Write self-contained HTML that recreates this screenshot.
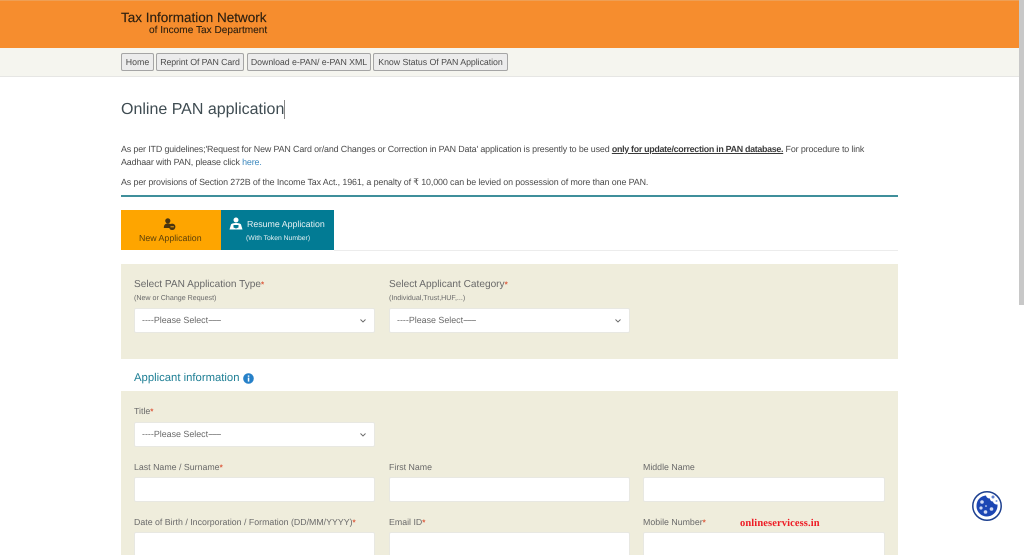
<!DOCTYPE html>
<html><head><meta charset="utf-8"><title>Online PAN application</title>
<style>
html,body{margin:0;padding:0;width:1024px;height:555px;overflow:hidden;background:#fff}
body{font-family:"Liberation Sans",sans-serif;color:#444;position:relative;text-rendering:geometricPrecision}
#w{left:0;top:0;width:1024px;height:555px;overflow:hidden;filter:blur(.3px)}
div,a{position:absolute;white-space:nowrap;box-sizing:border-box}
.t{line-height:14px}
.btn{top:53px;height:18px;background:#ececec;border:1px solid #a5a5a5;border-radius:2px;font-size:8.8px;line-height:16px;color:#4a4a4a;text-align:center}
.lab{font-size:8.8px;color:#696969;line-height:12px}
.lab2{font-size:10.1px;color:#696969;line-height:12px}
.sub{font-size:7.1px;color:#696969;line-height:10px}
.i{background:#fff;border:1px solid #e8e8e2;border-radius:2px;width:241px;height:25px}
.sel{font-size:8.9px;color:#696969;line-height:23px;padding-left:7px}
.sel svg{position:absolute;right:7px;top:9px}
.sel i{font-style:normal;letter-spacing:-.9px}
b.r{color:#dc5a3c;font-weight:bold;font-size:8px}
.p{font-size:8.9px;color:#4a4a4a;letter-spacing:-.13px}
</style></head><body>
<div id="w">
<div style="left:0;top:0;width:1019px;height:48px;background:#f68d2e;border-top:1px solid #ee9f55"></div>
<div class="t" style="left:121px;top:10px;font-size:13.5px;color:#2e2010;line-height:15px;-webkit-text-stroke:.15px #2e2010">Tax Information Network</div>
<div class="t" style="left:149px;top:25px;font-size:10.1px;color:#2e2010;line-height:12px;-webkit-text-stroke:.1px #2e2010">of Income Tax Department</div>
<div style="left:0;top:48px;width:1019px;height:29px;background:#f5f5ef;border-bottom:1px solid #e6e6e4"></div>
<div class="btn" style="left:121px;width:33px">Home</div>
<div class="btn" style="left:156px;width:88px;letter-spacing:-.1px">Reprint Of PAN Card</div>
<div class="btn" style="left:247px;width:124px;letter-spacing:-.05px">Download e-PAN/ e-PAN XML</div>
<div class="btn" style="left:373px;width:135px;letter-spacing:-.05px">Know Status Of PAN Application</div>
<div style="left:1019px;top:0;width:5px;height:305px;background:#c8c8c8"></div>

<div class="t" style="left:121px;top:100px;font-size:16px;line-height:20px;color:#3f4c52">Online PAN application</div>
<div style="left:284px;top:100px;width:1px;height:19px;background:#888"></div>

<div class="t p" style="left:121px;top:141.500px">As per ITD guidelines;'Request for New PAN Card or/and Changes or Correction in PAN Data' application is presently to be used <b style="text-decoration:underline;color:#3a3a3a;letter-spacing:-.3px">only for update/correction in PAN database.</b> For procedure to link</div>
<div class="t p" style="left:121px;top:155px">Aadhaar with PAN, please click <span style="color:#3b87bd">here.</span></div>
<div class="t p" style="left:121px;top:175px;letter-spacing:-.11px">As per provisions of Section 272B of the Income Tax Act., 1961, a penalty of ₹ 10,000 can be levied on possession of more than one PAN.</div>
<div style="left:121px;top:195px;width:777px;height:2px;background:#3f8f9b"></div>

<div style="left:121px;top:210px;width:100px;height:40px;background:#fea500"></div>
<div style="left:221px;top:210px;width:112.500px;height:40px;background:#027b94"></div>
<div style="left:334px;top:250px;width:564px;height:1px;background:#ececec"></div>
<svg style="position:absolute;left:163px;top:218px" width="13" height="13" viewBox="0 0 13 13"><circle cx="4.800" cy="2.800" r="2.600" fill="#4a3510"/><path d="M.8 10c0-3.500 1.700-4.500 4-4.500s3 .6 3.500 1.500L6.500 10z" fill="#4a3510"/><circle cx="9.200" cy="8.800" r="3.200" fill="#4a3510"/><path d="M7.500 8.800h3.400" stroke="#fea500" stroke-width="1"/></svg>
<div class="t" style="left:139px;top:230.500px;font-size:8.800px;color:#5a3f0a">New Application</div>
<svg style="position:absolute;left:229px;top:217px" width="14" height="14" viewBox="0 0 14 14"><circle cx="7" cy="3" r="2.500" fill="#fff"/><path d="M2 7.500c1-2 9-2 10 0l1.500 5H.5z" fill="#fff"/><path d="M4.500 8h5v2.500l-2.500 1-2.500-1z" fill="#027b94"/></svg>
<div class="t" style="left:247px;top:217px;font-size:8.800px;color:#e6f1f3">Resume Application</div>
<div class="t" style="left:246px;top:231.500px;font-size:6.800px;color:#e6f1f3">(With Token Number)</div>

<div style="left:121px;top:264px;width:777px;height:95px;background:#efeddc"></div>
<div class="lab2" style="left:134px;top:278.500px">Select PAN Application Type<b class="r">*</b></div>
<div class="sub" style="left:134px;top:293px">(New or Change Request)</div>
<div class="lab2" style="left:389px;top:278.500px">Select Applicant Category<b class="r">*</b></div>
<div class="sub" style="left:389px;top:293px">(Individual,Trust,HUF,...)</div>
<div class="i sel" style="left:134px;top:308px">----Please Select<i>------</i><svg width="8" height="6" viewBox="0 0 8 6"><path d="M1.500 1.500L4 4l2.500-2.500" fill="none" stroke="#666" stroke-width=".9"/></svg></div>
<div class="i sel" style="left:389px;top:308px">----Please Select<i>------</i><svg width="8" height="6" viewBox="0 0 8 6"><path d="M1.500 1.500L4 4l2.500-2.500" fill="none" stroke="#666" stroke-width=".9"/></svg></div>

<div class="t" style="left:134px;top:371px;font-size:11.300px;color:#1f7f95">Applicant information</div>
<svg style="position:absolute;left:243px;top:372.500px" width="11" height="11" viewBox="0 0 11 11"><circle cx="5.500" cy="5.500" r="5.300" fill="#2680c8"/><rect x="4.800" y="4.600" width="1.500" height="4" fill="#fff"/><rect x="4.800" y="2.400" width="1.500" height="1.400" fill="#fff"/></svg>

<div style="left:121px;top:391px;width:777px;height:164px;background:#efeddc"></div>
<div class="lab" style="left:134px;top:405px">Title<b class="r">*</b></div>
<div class="i sel" style="left:134px;top:422px">----Please Select<i>------</i><svg width="8" height="6" viewBox="0 0 8 6"><path d="M1.500 1.500L4 4l2.500-2.500" fill="none" stroke="#666" stroke-width=".9"/></svg></div>
<div class="lab" style="left:134px;top:460.500px">Last Name / Surname<b class="r">*</b></div>
<div class="lab" style="left:389px;top:460.500px">First Name</div>
<div class="lab" style="left:643px;top:460.500px">Middle Name</div>
<div class="i" style="left:134px;top:477px"></div>
<div class="i" style="left:389px;top:477px"></div>
<div class="i" style="left:643px;top:477px;width:242px"></div>
<div class="lab" style="left:134px;top:515.500px">Date of Birth / Incorporation / Formation (DD/MM/YYYY)<b class="r">*</b></div>
<div class="lab" style="left:389px;top:515.500px">Email ID<b class="r">*</b></div>
<div class="lab" style="left:643px;top:515.500px">Mobile Number<b class="r">*</b></div>
<div class="i" style="left:134px;top:532px;height:30px"></div>
<div class="i" style="left:389px;top:532px;height:30px"></div>
<div class="i" style="left:643px;top:532px;width:242px;height:30px"></div>

<div class="t" style="left:740px;top:517px;font-family:'Liberation Serif',serif;font-weight:bold;font-size:10.500px;color:#ee1c25;letter-spacing:.1px">onlineservicess.in</div>

<svg style="position:absolute;left:972px;top:491px" width="30" height="30" viewBox="0 0 30 30"><circle cx="15" cy="15" r="14.200" fill="#fff" stroke="#1c3f8f" stroke-width="1.500"/><path d="M14 4.500c.5 2 2 3 4 3 0 2 1.500 3 3 3 .5 2 2 3 4.500 3 .5 6.500-4.500 12-10.500 12S4.500 21 4.500 15 8.500 5 14 4.500z" fill="#1c46b4"/><circle cx="10" cy="11" r="1.800" fill="#cfd8f3"/><circle cx="9" cy="17" r="1.600" fill="#cfd8f3"/><circle cx="13.500" cy="21" r="1.800" fill="#cfd8f3"/><circle cx="19.500" cy="18" r="1.800" fill="#cfd8f3"/><circle cx="14" cy="15" r=".8" fill="#fff"/><circle cx="21" cy="6" r="1.500" fill="#5f80d0"/><circle cx="24.500" cy="10" r="1" fill="#7d9ade"/></svg>
</div>
</body></html>
